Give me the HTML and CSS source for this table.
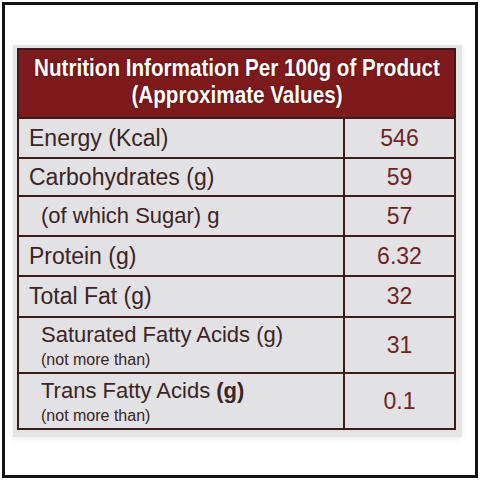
FILE: index.html
```html
<html>
<head>
    <link rel="stylesheet" href="styles.css">
</head>
<body>
    <div class="frame">
        <div class="panel">
            <table class="facts">
                <colgroup>
                    <col class="label-col">
                    <col>
                </colgroup>
                <tr>
                    <th colspan="2" class="title">
                        <span class="title-text">Nutrition Information Per 100g of Product<br>(Approximate Values)</span>
                    </th>
                </tr>
                <tr class="row">
                    <td class="label">Energy (Kcal)</td>
                    <td class="value">546</td>
                </tr>
                <tr class="row short">
                    <td class="label">Carbohydrates (g)</td>
                    <td class="value">59</td>
                </tr>
                <tr class="row">
                    <td class="label sub">(of which Sugar) g</td>
                    <td class="value">57</td>
                </tr>
                <tr class="row">
                    <td class="label">Protein (g)</td>
                    <td class="value">6.32</td>
                </tr>
                <tr class="row wide">
                    <td class="label">Total Fat (g)</td>
                    <td class="value">32</td>
                </tr>
                <tr class="row tall">
                    <td class="label sub">Saturated Fatty Acids (g)<span class="note">(not more than)</span></td>
                    <td class="value">31</td>
                </tr>
                <tr class="row tall">
                    <td class="label sub">Trans Fatty Acids <b>(g)</b><span class="note">(not more than)</span></td>
                    <td class="value">0.1</td>
                </tr>
            </table>
        </div>
    </div>
</body>
</html>
```

FILE: styles.css
```css
body {
    margin: 0;
    background-color: #fff;
    font-family: "Liberation Sans", Arial, sans-serif;
}
.frame {
    box-sizing: border-box;
    width: 476px;
    height: 476px;
    margin: 2px;
    border: 3px solid #111;
    padding: 40px 0 0 8px;
}
.panel {
    width: 449px;
    height: 392px;
    box-sizing: border-box;
    padding: 3px 6px 0 4px;
    background-color: #e4e4e5;
    box-shadow: 0 2px 6px rgba(0, 0, 0, 0.08);
}
.facts {
    width: 100%;
    table-layout: fixed;
    border-collapse: collapse;
    border: 2px solid #3d1a1e;
}
.label-col {
    width: 326px;
}
.title {
    height: 69px;
    padding: 0 0 5px;
    overflow: hidden;
    background-color: #7c1a1c;
}
.title-text {
    display: block;
    width: 476px;
    margin-left: calc(50% - 238px);
    transform: scaleX(0.86);
    white-space: nowrap;
    color: #fff;
    font-weight: bold;
    font-size: 24px;
    line-height: 27px;
    text-align: center;
    text-shadow: 0 0 2px rgba(60, 0, 0, 0.7);
}
.row td {
    height: 40px;
    padding: 0;
    border: 2px solid #3d1a1e;
    background-color: #e2e2e4;
}
.row.short td {
    height: 38px;
}
.row.wide td {
    height: 41px;
}
.row.tall td {
    height: 56px;
}
.label {
    padding-left: 10px !important;
    color: #3a2426;
    font-size: 23px;
}
.label.sub {
    padding-left: 22px !important;
    font-size: 22px;
}
.note {
    display: block;
    margin-top: 3px;
    font-size: 16px;
}
.value {
    text-align: center;
    color: #6e2326;
    font-size: 23px;
}
```
